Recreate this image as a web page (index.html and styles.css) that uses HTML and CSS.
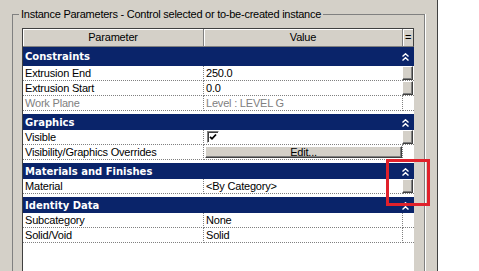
FILE: index.html
```html
<!DOCTYPE html>
<html lang="en">
<head>
    <meta charset="UTF-8">
    <title>Instance Parameters</title>
    <link rel="stylesheet" href="styles.css">
</head>
<body>
    <div class="window">
        <div class="panel">
            <fieldset class="group">
                <legend>Instance Parameters - Control selected or to-be-created instance</legend>
                <div class="group-body">
                    <div class="props">
                        <!-- header -->
                        <div class="head">
                            <div class="hcell">Parameter</div>
                            <div class="hcell">Value</div>
                            <div class="hcell">=</div>
                        </div>

                        <div class="cat first">
                            <span class="cat-name">Constraints</span>
                            <span class="cat-toggle"><svg width="7" height="8" viewBox="0 0 7 8"><path d="M0.5 3.5 L3.5 0.8 L6.5 3.5 M0.5 7.5 L3.5 4.8 L6.5 7.5" fill="none" stroke="#fff" stroke-width="1.4"/></svg></span>
                        </div>
                        <div class="row">
                            <div class="name">Extrusion End</div>
                            <div class="val">250.0</div>
                            <div class="eq"><span class="link-btn"></span></div>
                        </div>
                        <div class="row">
                            <div class="name">Extrusion Start</div>
                            <div class="val">0.0</div>
                            <div class="eq"><span class="link-btn"></span></div>
                        </div>
                        <div class="row disabled">
                            <div class="name">Work Plane</div>
                            <div class="val">Level : LEVEL G</div>
                            <div class="eq"></div>
                        </div>

                        <div class="cat">
                            <span class="cat-name">Graphics</span>
                            <span class="cat-toggle"><svg width="7" height="8" viewBox="0 0 7 8"><path d="M0.5 3.5 L3.5 0.8 L6.5 3.5 M0.5 7.5 L3.5 4.8 L6.5 7.5" fill="none" stroke="#fff" stroke-width="1.4"/></svg></span>
                        </div>
                        <div class="row">
                            <div class="name">Visible</div>
                            <div class="val"><span class="check"><svg width="8" height="8" viewBox="0 0 8 8"><path d="M1 3.8 L3 5.8 L7 1.5" fill="none" stroke="#000" stroke-width="1.8"/></svg></span></div>
                            <div class="eq"><span class="link-btn"></span></div>
                        </div>
                        <div class="row">
                            <div class="name">Visibility/Graphics Overrides</div>
                            <div class="val"><span class="edit-btn">Edit...</span></div>
                            <div class="eq"></div>
                        </div>

                        <div class="cat">
                            <span class="cat-name">Materials and Finishes</span>
                            <span class="cat-toggle"><svg width="7" height="8" viewBox="0 0 7 8"><path d="M0.5 3.5 L3.5 0.8 L6.5 3.5 M0.5 7.5 L3.5 4.8 L6.5 7.5" fill="none" stroke="#fff" stroke-width="1.4"/></svg></span>
                        </div>
                        <div class="row">
                            <div class="name">Material</div>
                            <div class="val">&lt;By Category&gt;</div>
                            <div class="eq"><span class="link-btn"></span></div>
                        </div>

                        <div class="cat">
                            <span class="cat-name">Identity Data</span>
                            <span class="cat-toggle"><svg width="7" height="8" viewBox="0 0 7 8"><path d="M0.5 3.5 L3.5 0.8 L6.5 3.5 M0.5 7.5 L3.5 4.8 L6.5 7.5" fill="none" stroke="#fff" stroke-width="1.4"/></svg></span>
                        </div>
                        <div class="row">
                            <div class="name">Subcategory</div>
                            <div class="val">None</div>
                            <div class="eq"></div>
                        </div>
                        <div class="row">
                            <div class="name">Solid/Void</div>
                            <div class="val">Solid</div>
                            <div class="eq"></div>
                        </div>
                    </div>
                </div>
            </fieldset>
        </div>
        <div class="outside"></div>
    </div>

    <!-- highlight box drawn over the screenshot -->
    <div class="callout"></div>
</body>
</html>
```

FILE: styles.css
```css
body {
    margin: 0;
    font-family: "Liberation Sans", Arial, sans-serif;
    font-size: 11px;
    letter-spacing: -0.2px;
    color: #000;
    background-color: #fff;
}
.window {
    display: flex;
    height: 271px;
    overflow: hidden;
}
.panel {
    width: 413px;
    padding: 8px 12px 0 12px;
    background-color: #d4d0c8;
    border-right: 1px solid #404040;
    display: flex;
    flex-direction: column;
}
.outside {
    flex: 1;
    background-color: #fff;
}
/* group box */
.group {
    flex: 1;
    margin: 0;
    padding: 0;
    border: 1px solid #808080;
    border-bottom: none;
    box-shadow: 1px 0 0 #fff;
    min-width: 0;
}
.group legend {
    margin-left: 6px;
    padding: 0 2px;
    line-height: 13px;
    letter-spacing: -0.25px;
}
.group-body {
    padding: 7px 10px 0 9px;
    height: 100%;
    box-sizing: border-box;
}
/* property grid */
.props {
    width: 391px;
    height: 260px;
    background-color: #fff;
    border-top: 1px solid #404040;
    border-left: 1px solid #404040;
}
.head,
.row {
    display: grid;
    grid-template-columns: 181px 199px 11px;
}
.hcell {
    height: 17px;
    line-height: 17px;
    text-align: center;
    background-color: #d4d0c8;
    border-right: 1px solid #808080;
    border-bottom: 1px solid #808080;
    box-shadow: inset 1px 1px 0 #fff;
}
.hcell:last-child {
    border-right: 1px solid #404040;
}
.cat {
    display: flex;
    justify-content: space-between;
    align-items: center;
    height: 16px;
    border-top: 3px solid #fff;
    background-color: #0a246a;
    background-clip: padding-box;
    color: #fff;
}
.cat.first {
    height: 19px;
    border-top: none;
}
.cat-name {
    padding-left: 2px;
    font-family: "DejaVu Sans", Verdana, sans-serif;
    font-size: 10px;
    font-weight: bold;
    letter-spacing: 0;
}
.cat-toggle {
    width: 12px;
    display: flex;
    padding-top: 1px;
}
.row {
    height: 15px;
    line-height: 14px;
}
.name,
.val,
.eq {
    border-bottom: 1px dotted #808080;
    white-space: nowrap;
    overflow: hidden;
}
.name {
    padding-left: 2px;
    border-right: 1px dotted #808080;
}
.val {
    padding-left: 2px;
    border-right: 1px dotted #808080;
}
.eq {
    display: flex;
    overflow: visible;
}
.disabled .name,
.disabled .val {
    color: #808080;
}
.link-btn {
    width: 9px;
    height: 12px;
    margin-left: -1px;
    background-color: #d4d0c8;
    border: 1px solid;
    border-color: #fff #404040 #404040 #fff;
    box-shadow: inset -1px -1px 0 #808080;
}
.check {
    display: inline-flex;
    align-items: center;
    justify-content: center;
    width: 10px;
    height: 10px;
    margin: 1px 0 0 1px;
    vertical-align: top;
    background-color: #fff;
    border: 1px solid;
    border-color: #808080 #fff #fff #808080;
    box-shadow: inset 1px 1px 0 #404040;
}
.edit-btn {
    display: block;
    height: 10px;
    line-height: 10px;
    margin: 1px 0 0 -1px;
    text-align: center;
    background-color: #d4d0c8;
    border: 1px solid;
    border-color: #fff #404040 #404040 #fff;
    box-shadow: inset -1px -1px 0 #808080;
}
/* red annotation box */
.callout {
    position: absolute;
    left: 386px;
    top: 159px;
    width: 38px;
    height: 41px;
    border: 3px solid #e0212b;
}
```
